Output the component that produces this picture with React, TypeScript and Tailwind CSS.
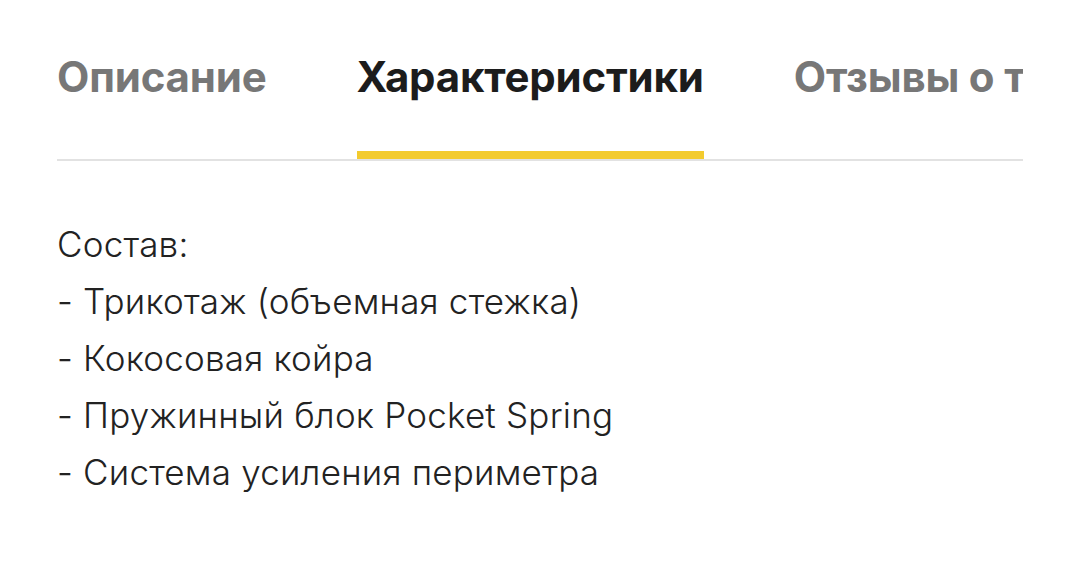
import React from 'react';

const tabs = [
  { label: 'Описание', active: false },
  { label: 'Характеристики', active: true },
  { label: 'Отзывы о товаре', active: false },
];

const lines = [
  'Состав:',
  '- Трикотаж (объемная стежка)',
  '- Кокосовая койра',
  '- Пружинный блок Pocket Spring',
  '- Система усиления периметра',
];

export default function App() {
  return (
    <div className="w-[1080px] h-[571px] bg-white px-[57px] pt-[49px]">
      <div className="relative overflow-hidden">
        <div className="flex gap-[90px] whitespace-nowrap font-['Inter',sans-serif] font-bold text-[42px] leading-[56px] tracking-[-0.2px]">
          {tabs.map((t) => (
            <div key={t.label} className="flex flex-col">
              <span className={t.active ? 'text-[#1c1c1c]' : 'text-[#777777]'}>{t.label}</span>
              <div className={`mt-[46px] h-[8px] ${t.active ? 'bg-[#f3cb2e]' : 'bg-transparent'}`} />
            </div>
          ))}
        </div>
        <div className="h-[2px] bg-[#e2e2e2]" />
      </div>

      <div className="mt-[55px] font-['Inter',sans-serif] font-light text-[35px] leading-[57px] text-[#222222] tracking-[0.2px]">
        {lines.map((l) => (
          <div key={l}>{l}</div>
        ))}
      </div>
    </div>
  );
}
